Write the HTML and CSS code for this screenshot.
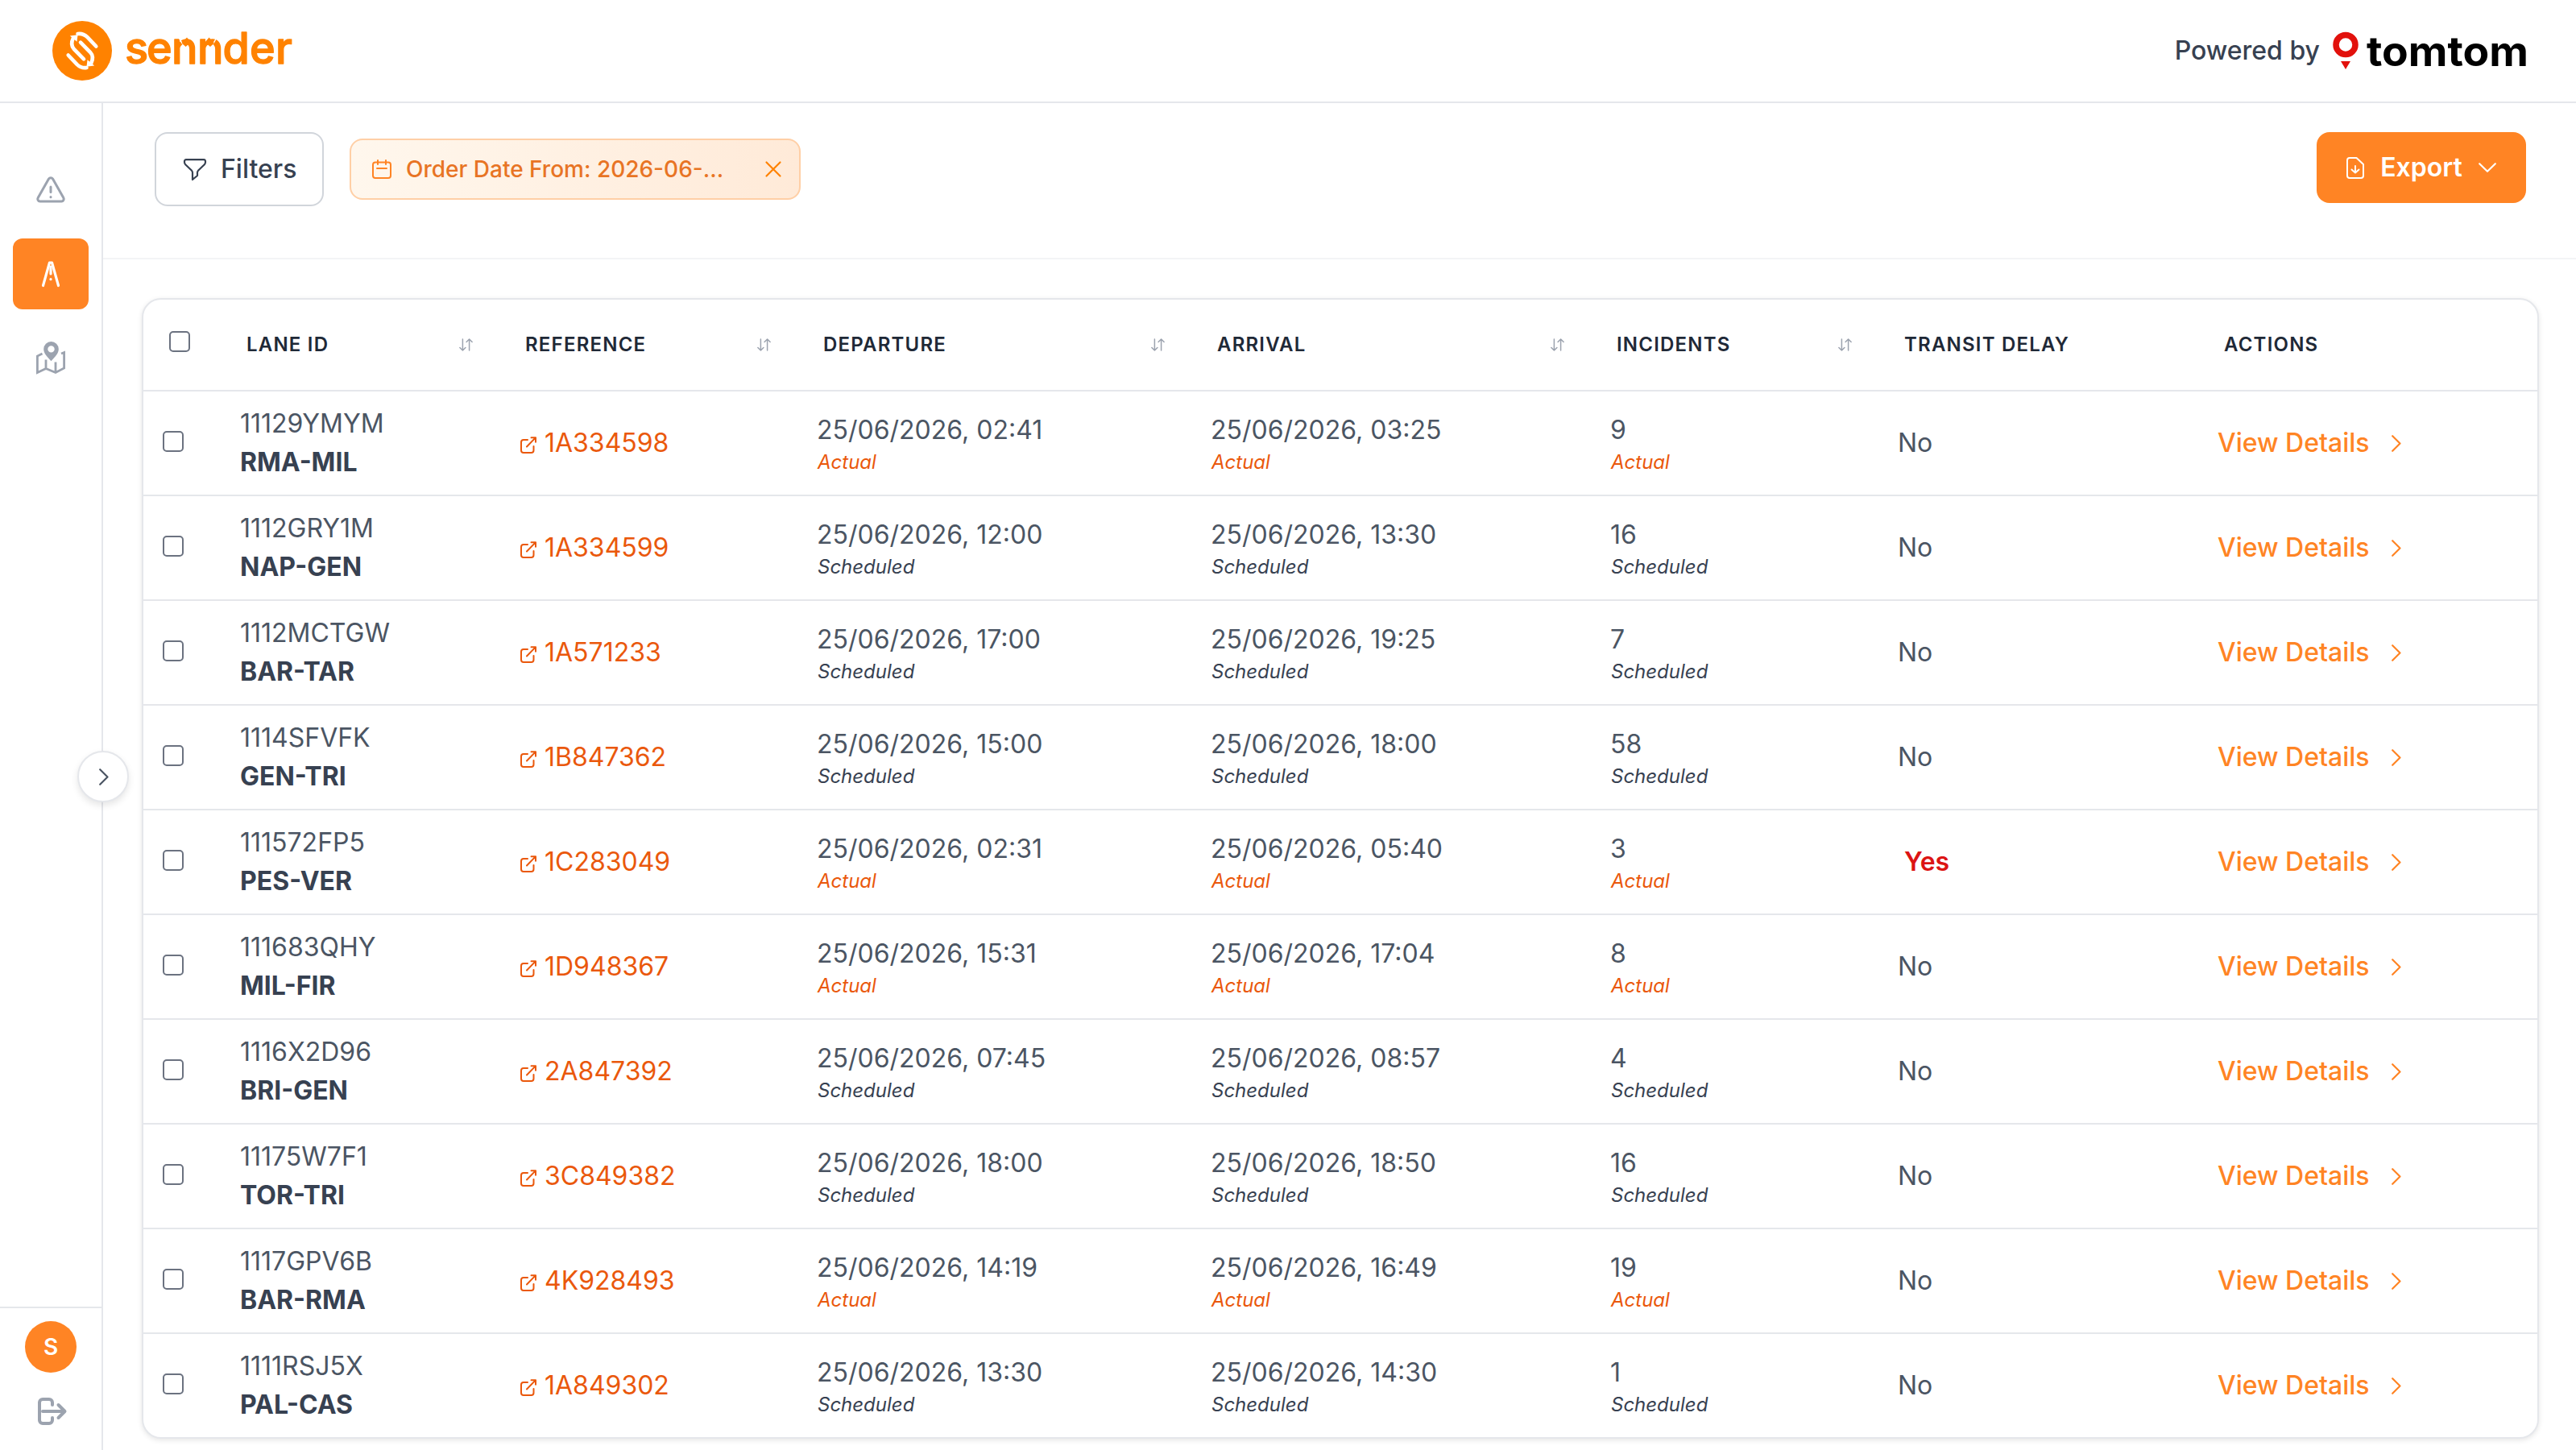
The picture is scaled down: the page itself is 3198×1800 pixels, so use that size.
FILE: index.html
```html
<!DOCTYPE html>
<html lang="en">
<head>
    <meta charset="UTF-8" />
    <meta name="viewport" content="width=device-width, initial-scale=1.0" />
    <title>sennder - Lanes</title>
    <link rel="stylesheet" href="styles.css">
</head>
<body>
    <!-- icons used in the table rows -->
    <svg class="sprite">
        <symbol id="icon-link" viewBox="0 0 20 21" fill="none" stroke="currentColor" stroke-width="2" stroke-linecap="round" stroke-linejoin="round">
            <path d="M9 4H4a3 3 0 0 0-3 3v10a3 3 0 0 0 3 3h9.500a3 3 0 0 0 3-3v-5M13.500 1.200H19v5.500M18.800 1.400L8 12.500" />
        </symbol>
        <symbol id="icon-sort" viewBox="0 0 17 16" fill="none" stroke="currentColor" stroke-width="1.500" stroke-linecap="round" stroke-linejoin="round">
            <path d="M4.400 1v14M.9 11.500l3.500 3.500 3.500-3.500M12.600 15V1M9.100 4.500L12.600 1l3.500 3.500" />
        </symbol>
        <symbol id="icon-right" viewBox="0 0 12 21" fill="none" stroke="currentColor" stroke-width="2.200" stroke-linecap="round" stroke-linejoin="round">
            <path d="M1.200 1.200l9.300 9.300-9.300 9.300" />
        </symbol>
    </svg>

    <header class="header">
        <svg class="logo" width="300" height="80" viewBox="0 -3 300 80">
            <circle cx="37" cy="37" r="37" fill="#ff8200" />
            <g fill="none" stroke="#fff" stroke-width="4.600" stroke-linecap="round">
                <path d="M54.300 31.500L43.500 20.200C40 16.800 36 15.300 31.500 16" />
                <path d="M26 21C22.500 28 24 32 27 35.200L39 47.300" />
                <path d="M21.800 18.500l9.700-1.200-1 8.500z" fill="#fff" stroke="none" />
            </g>
            <g transform="rotate(180 37 37)" fill="none" stroke="#fff" stroke-width="4.600" stroke-linecap="round">
                <path d="M54.300 31.500L43.500 20.200C40 16.800 36 15.300 31.500 16" />
                <path d="M26 21C22.500 28 24 32 27 35.200L39 47.300" />
                <path d="M21.800 18.500l9.700-1.200-1 8.500z" fill="#fff" stroke="none" />
            </g>
            <text class="logo-text" x="90 117 148 180 211.500 245 277" y="53">sennder</text>
            <path d="M157.500 21.500l4.500 8M203.500 21.500l-4.500 8" stroke="#fff" stroke-width="1.500" />
            <path d="M160.500 27.500l6.500-7 5 6-6.500 5.500zM201 27.500l-6.500-7-5 6 6.500 5.500z" fill="#ff8200" />
        </svg>
        <div class="powered">
            <span>Powered by</span>
            <svg width="242" height="50" viewBox="0 0 242 50">
                <circle cx="16" cy="17.500" r="12" fill="none" stroke="#e2110c" stroke-width="7.500" />
                <path d="M10 38h12l-6 10z" fill="#e2110c" />
                <text class="tomtom-text" x="42" y="43.500" textLength="201" lengthAdjust="spacingAndGlyphs">tomtom</text>
            </svg>
        </div>
    </header>

    <div class="layout">
        <aside class="sidebar">
            <nav class="menu">
                <a class="menu-item">
                    <svg width="36" height="34" viewBox="0 0 36 34" fill="none" stroke="currentColor" stroke-width="3" stroke-linecap="round" stroke-linejoin="round">
                        <path d="M15.500 3a3 3 0 0 1 5 0l13.300 23.500a3 3 0 0 1-2.500 4.500H4.700a3 3 0 0 1-2.500-4.500z" />
                        <path d="M18 13v6.500M18 25.500v.2" />
                    </svg>
                </a>
                <a class="menu-item active">
                    <svg width="24" height="34" viewBox="0 0 24 34" fill="none" stroke="currentColor" stroke-width="3.200" stroke-linecap="round" stroke-linejoin="round">
                        <path d="M2.500 31.500L10.500 3h3l8 28.500" />
                        <path d="M12 8v9M12 23.500v.2" />
                    </svg>
                </a>
                <a class="menu-item">
                    <svg width="36" height="40" viewBox="0 0 36 40">
                        <path d="M7.500 15L1.400 18v20.500l10.600-5 12 5 10.600-5.500V13.500L31 15M12 22.500v11M24 25.500v13" fill="none" stroke="currentColor" stroke-width="2.800" />
                        <path d="M18.500 0a9.300 9.300 0 0 1 9.300 9.300c0 6-5.300 10.500-9.300 15-4-4.500-9.300-9-9.300-15A9.300 9.300 0 0 1 18.500 0zm0 5.200a4.200 4.200 0 1 0 0 8.400 4.200 4.200 0 0 0 0-8.400z" fill="currentColor" fill-rule="evenodd" />
                    </svg>
                </a>
            </nav>
            <div class="account">
                <div class="avatar">S</div>
                <svg class="logout" width="38" height="34" viewBox="0 0 38 34" fill="none" stroke="currentColor" stroke-width="4" stroke-linecap="round" stroke-linejoin="round">
                    <path d="M19 9V6a4 4 0 0 0-4-4H7a4 4 0 0 0-4 4v22a4 4 0 0 0 4 4h8a4 4 0 0 0 4-4v-3M7 17h27M26.500 9l8 8-8 8" />
                </svg>
            </div>
            <button class="toggle">
                <svg width="12" height="21"><use href="#icon-right" /></svg>
            </button>
        </aside>

        <main class="main">
            <div class="toolbar">
                <div class="filters">
                    <button class="filter-btn">
                        <svg width="28" height="27" viewBox="0 0 28 27" fill="none" stroke="currentColor" stroke-width="2.200" stroke-linejoin="round">
                            <path d="M3 1.200h22a2 2 0 0 1 2 2v1.300a4 4 0 0 1-1.200 2.700l-7.600 7.300a4 4 0 0 0-1.200 2.800V21l-6 5v-8.700a4 4 0 0 0-1.200-2.800L2.200 7.200A4 4 0 0 1 1 4.500V3.200a2 2 0 0 1 2-2z" />
                        </svg>
                        Filters
                    </button>
                    <div class="chip">
                        <svg width="24" height="24" viewBox="0 0 24 24" fill="none" stroke="currentColor" stroke-width="2" stroke-linecap="round">
                            <rect x="1" y="3.500" width="22" height="19.500" rx="3" />
                            <path d="M7 1v5M17 1v5M6 11h12" />
                        </svg>
                        <span class="chip-label">Order Date From: 2026-06-...</span>
                        <svg class="chip-close" width="20" height="20" viewBox="0 0 20 20" fill="none" stroke="currentColor" stroke-width="2.200" stroke-linecap="round">
                            <path d="M1.500 1.500l17 17M18.500 1.500l-17 17" />
                        </svg>
                    </div>
                </div>
                <button class="export-btn">
                    <svg width="22" height="27" viewBox="0 0 22 27" fill="none" stroke="currentColor" stroke-width="2" stroke-linecap="round" stroke-linejoin="round">
                        <path d="M12.500 1H4a3 3 0 0 0-3 3v19a3 3 0 0 0 3 3h14a3 3 0 0 0 3-3V9zM11 11v8.500M6.500 15.500l4.500 4 4.500-4" />
                    </svg>
                    <span>Export</span>
                    <svg width="22" height="12" viewBox="0 0 22 12" fill="none" stroke="currentColor" stroke-width="2.200" stroke-linecap="round" stroke-linejoin="round">
                        <path d="M1.200 1.200L11 10.800l9.800-9.600" />
                    </svg>
                </button>
            </div>

            <div class="card">
                <table>
                    <colgroup>
                        <col class="col-check">
                        <col class="col-lane">
                        <col class="col-reference">
                        <col class="col-departure">
                        <col class="col-arrival">
                        <col class="col-incidents">
                        <col class="col-delay">
                        <col class="col-actions">
                    </colgroup>
                    <thead>
                        <tr id="headRow">
                            <th><input type="checkbox" /></th>
                        </tr>
                    </thead>
                    <tbody id="laneRows"></tbody>
                </table>
            </div>
        </main>
    </div>

    <script>
        const columns = [
            ["Lane ID", true],
            ["Reference", true],
            ["Departure", true],
            ["Arrival", true],
            ["Incidents", true],
            ["Transit Delay", false],
            ["Actions", false]
        ];

        // id, lane, reference, departure, arrival, incidents, status, delay
        const lanes = [
            ["11129YMYM", "RMA-MIL", "1A334598", "02:41", "03:25", 9, "Actual", "No"],
            ["1112GRY1M", "NAP-GEN", "1A334599", "12:00", "13:30", 16, "Scheduled", "No"],
            ["1112MCTGW", "BAR-TAR", "1A571233", "17:00", "19:25", 7, "Scheduled", "No"],
            ["1114SFVFK", "GEN-TRI", "1B847362", "15:00", "18:00", 58, "Scheduled", "No"],
            ["111572FP5", "PES-VER", "1C283049", "02:31", "05:40", 3, "Actual", "Yes"],
            ["111683QHY", "MIL-FIR", "1D948367", "15:31", "17:04", 8, "Actual", "No"],
            ["1116X2D96", "BRI-GEN", "2A847392", "07:45", "08:57", 4, "Scheduled", "No"],
            ["11175W7F1", "TOR-TRI", "3C849382", "18:00", "18:50", 16, "Scheduled", "No"],
            ["1117GPV6B", "BAR-RMA", "4K928493", "14:19", "16:49", 19, "Actual", "No"],
            ["1111RSJ5X", "PAL-CAS", "1A849302", "13:30", "14:30", 1, "Scheduled", "No"]
        ];

        const day = "25/06/2026";

        function statusCell(value, status) {
            return `<td><div>${value}</div><div class="status ${status.toLowerCase()}">${status}</div></td>`;
        }

        document.getElementById("headRow").innerHTML += columns.map(([name, sortable]) => `
            <th><div class="th-inner">${name}${sortable ? '<svg class="sort" width="17" height="16"><use href="#icon-sort" /></svg>' : ""}</div></th>
        `).join("");

        document.getElementById("laneRows").innerHTML = lanes.map(([id, lane, ref, dep, arr, count, status, delay]) => `
            <tr>
                <td><input type="checkbox" /></td>
                <td><div>${id}</div><div class="lane">${lane}</div></td>
                <td><a class="reference"><svg width="20" height="21"><use href="#icon-link" /></svg>${ref}</a></td>
                ${statusCell(day + ", " + dep, status)}
                ${statusCell(day + ", " + arr, status)}
                ${statusCell(count, status)}
                <td><span class="delay-${delay.toLowerCase()}">${delay}</span></td>
                <td><a class="details">View Details<svg width="12" height="21"><use href="#icon-right" /></svg></a></td>
            </tr>
        `).join("");
    </script>
</body>
</html>
```
FILE: styles.css
```css
* {
    margin: 0;
    padding: 0;
    box-sizing: border-box;
}

body {
    font-family: 'Inter', sans-serif;
    font-size: 32px;
    line-height: 48px;
    color: #374151;
    background-color: #fff;
    height: 100vh;
    overflow: hidden;
    display: flex;
    flex-direction: column;
}

button {
    font-family: inherit;
    font-size: inherit;
    line-height: inherit;
    border: none;
    cursor: pointer;
}

svg {
    display: block;
    flex-shrink: 0;
    overflow: visible;
}

.sprite {
    width: 0;
    height: 0;
    position: absolute;
}

/* header */
.header {
    height: 128px;
    flex-shrink: 0;
    display: flex;
    justify-content: space-between;
    align-items: center;
    padding: 0 60px 0 65px;
    border-bottom: 2px solid #e5e7eb;
}

.logo-text {
    font-size: 54px;
    font-weight: 500;
    fill: #ff8200;
    stroke: #ff8200;
    stroke-width: 1.3;
    stroke-linejoin: round;
}

.powered {
    display: flex;
    align-items: center;
    gap: 16px;
    font-weight: 500;
}

.tomtom-text {
    font-size: 51px;
    font-weight: 700;
    fill: #000;
}

.layout {
    flex: 1;
    display: flex;
    min-height: 0;
}

/* sidebar */
.sidebar {
    position: relative;
    width: 128px;
    flex-shrink: 0;
    display: flex;
    flex-direction: column;
    justify-content: space-between;
    border-right: 2px solid #e5e7eb;
    color: #9ca3af;
}

.menu {
    display: flex;
    flex-direction: column;
    gap: 16px;
    padding: 64px 16px 0;
}

.menu-item {
    display: flex;
    align-items: center;
    justify-content: center;
    width: 94px;
    height: 88px;
    border-radius: 12px;
}

.menu-item.active {
    background-color: #ff8424;
    color: #fff;
}

.account {
    display: flex;
    flex-direction: column;
    align-items: center;
    gap: 31px;
    height: 178px;
    padding-top: 16px;
    border-top: 2px solid #e5e7eb;
}

.avatar {
    width: 64px;
    height: 64px;
    border-radius: 50%;
    background-color: #ff8424;
    color: #fff;
    font-size: 28px;
    font-weight: 600;
    line-height: 64px;
    text-align: center;
}

.logout {
    margin-left: 4px;
}

.toggle {
    position: absolute;
    top: 804px;
    right: -34px;
    width: 64px;
    height: 64px;
    display: flex;
    align-items: center;
    justify-content: center;
    padding-left: 2px;
    border: 2px solid #e5e7eb;
    border-radius: 50%;
    background-color: #fff;
    color: #4b5563;
    box-shadow: 0 4px 8px rgba(0, 0, 0, 0.1);
}

/* toolbar */
.main {
    flex: 1;
    min-width: 0;
}

.toolbar {
    height: 194px;
    display: flex;
    justify-content: space-between;
    align-items: flex-start;
    padding: 36px 62px 0 64px;
    border-bottom: 2px solid #f3f4f6;
}

.filters {
    display: flex;
    align-items: center;
    gap: 32px;
}

.filter-btn {
    display: flex;
    align-items: center;
    gap: 18px;
    width: 210px;
    height: 92px;
    padding: 0 0 0 34px;
    border: 2px solid #d1d5db;
    border-radius: 16px;
    background-color: #fff;
    color: #374151;
    font-weight: 500;
}

.chip {
    display: flex;
    align-items: center;
    width: 560px;
    height: 76px;
    padding: 0 22px 0 26px;
    border: 2px solid #ffcfa6;
    border-radius: 16px;
    background: linear-gradient(90deg, #fff7ed, #ffead8);
    color: #ff8424;
    font-size: 28px;
    font-weight: 500;
}

.chip-label {
    flex: 1;
    margin-left: 18px;
    color: #e87424;
    white-space: nowrap;
}

.chip-close {
    color: #ff8200;
}

.export-btn {
    display: flex;
    align-items: center;
    justify-content: space-between;
    width: 260px;
    height: 88px;
    padding: 0 37px;
    border-radius: 16px;
    background-color: #ff8424;
    color: #fff;
    font-weight: 600;
}

/* table */
.card {
    margin: 48px 46px 0 48px;
    border: 2px solid #e5e7eb;
    border-radius: 24px;
    background-color: #fff;
    box-shadow: 0 2px 6px rgba(0, 0, 0, 0.1);
    overflow: hidden;
}

table {
    width: 100%;
    table-layout: fixed;
    border-collapse: separate;
    border-spacing: 0;
}

.col-check { width: 96px; }
.col-lane { width: 346px; }
.col-reference { width: 370px; }
.col-departure { width: 489px; }
.col-arrival { width: 496px; }
.col-incidents { width: 357px; }
.col-delay { width: 397px; }

th {
    height: 114px;
    padding: 0 33px 0 32px;
    border-bottom: 2px solid #e5e7eb;
    color: #1f2937;
    font-size: 24px;
    font-weight: 600;
    letter-spacing: 1.2px;
    line-height: 32px;
    text-align: left;
    text-transform: uppercase;
}

th input {
    margin-bottom: 8px;
}

.th-inner {
    display: flex;
    align-items: center;
    justify-content: space-between;
}

.sort {
    color: #9ca3af;
}

td {
    height: 130px;
    padding: 0 24px;
    border-bottom: 2px solid #e5e7eb;
    color: #4b5563;
    white-space: nowrap;
}

tr:last-child td {
    height: 128px;
    border-bottom: none;
}

input[type="checkbox"] {
    appearance: none;
    display: block;
    width: 26px;
    height: 26px;
    border: 2px solid #6b7280;
    border-radius: 5px;
    background-color: #fff;
}

td input {
    margin-bottom: 4px;
}

.lane {
    color: #374151;
    font-weight: 700;
}

.reference {
    display: flex;
    align-items: center;
    gap: 10px;
    margin-left: 2px;
    color: #ea580c;
}

.reference svg {
    margin-top: 4px;
}

.status {
    font-size: 24px;
    font-style: italic;
    line-height: 32px;
    color: #374151;
    padding-left: 1px;
}

.status.actual {
    color: #ea580c;
}

.delay-yes {
    margin-left: 8px;
    color: #dc1414;
    font-weight: 600;
}

.details {
    display: flex;
    align-items: center;
    gap: 27px;
    color: #ff8424;
    font-weight: 500;
}
```
